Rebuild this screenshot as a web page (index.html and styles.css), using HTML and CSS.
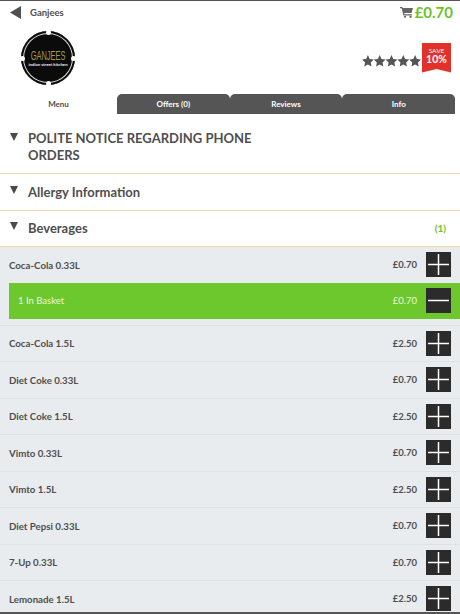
FILE: index.html
```html
<!DOCTYPE html>
<html lang="en">
<head>
<meta charset="utf-8">
<title>Ganjees</title>
<link rel="stylesheet" href="styles.css">
</head>
<body>
<div class="app">
  <header class="topbar">
    <svg class="back" width="11" height="13" viewBox="0 0 11 13"><path d="M0 6.500 11 0v13z" fill="#505050"/></svg>
    <span class="shop">Ganjees</span>
    <span class="spacer"></span>
    <svg class="cart" width="13" height="12" viewBox="0 0 13 12"><path d="M0 1h2.400l.3 1H13l-1.500 5H4.200l.3 1.200H12V9.500H3.400L1.600 2.200H0z" fill="#666"/><circle cx="5" cy="10.800" r="1.100" fill="#666"/><circle cx="10.600" cy="10.800" r="1.100" fill="#666"/></svg>
    <span class="total">£0.70</span>
  </header>
  <section class="brand">
    <div class="logo">
      <i class="dot dot-t"></i><i class="dot dot-b"></i><i class="dot dot-l"></i><i class="dot dot-r"></i>
      <span class="logo-name">GANJEES</span>
      <span class="logo-sub">indian street kitchen</span>
    </div>
    <span class="spacer"></span>
    <div class="stars">
      <svg width="59" height="12" viewBox="0 0 60 12" fill="#555">
        <path d="M6 0l1.800 4 4.200.5-3.100 2.900.8 4.300L6 9.600 2.300 11.700l.8-4.300L0 4.500 4.200 4z"/>
        <path transform="translate(12)" d="M6 0l1.800 4 4.200.5-3.100 2.900.8 4.300L6 9.600 2.300 11.700l.8-4.300L0 4.500 4.200 4z"/>
        <path transform="translate(24)" d="M6 0l1.800 4 4.200.5-3.100 2.900.8 4.300L6 9.600 2.300 11.700l.8-4.300L0 4.500 4.200 4z"/>
        <path transform="translate(36)" d="M6 0l1.800 4 4.200.5-3.100 2.900.8 4.300L6 9.600 2.300 11.700l.8-4.300L0 4.500 4.200 4z"/>
        <path transform="translate(48)" d="M6 0l1.800 4 4.200.5-3.100 2.900.8 4.300L6 9.600 2.300 11.700l.8-4.300L0 4.500 4.200 4z"/>
      </svg>
    </div>
    <div class="save"><span class="save-a">SAVE</span><span class="save-b">10%</span></div>
  </section>
  <nav class="tabs">
    <span class="tab tab-on">Menu</span>
    <span class="tab">Offers (0)</span>
    <span class="tab">Reviews</span>
    <span class="tab">Info</span>
  </nav>
  <section class="cat cat-first">
    <i class="tri"></i><h2 class="notice">POLITE NOTICE REGARDING PHONE ORDERS</h2>
  </section>
  <section class="cat">
    <i class="tri"></i><h2>Allergy Information</h2>
  </section>
  <section class="cat">
    <i class="tri"></i><h2>Beverages</h2><span class="count">(1)</span>
  </section>
  <ul class="items">
    <li class="item item-open">
      <div class="row"><span class="name">Coca-Cola 0.33L</span><span class="price">£0.70</span><span class="btn"><svg width="25" height="25" viewBox="0 0 25 25"><path d="M12.500 2v21M2 12.500h21" stroke="#fff" stroke-width="1.500"/></svg></span></div>
      <div class="basket"><span class="qty">1 In Basket</span><span class="price">£0.70</span><span class="btn"><svg width="25" height="25" viewBox="0 0 25 25"><path d="M2 12.500h21" stroke="#fff" stroke-width="1.500"/></svg></span></div>
    </li>
    <li class="item"><div class="row"><span class="name">Coca-Cola 1.5L</span><span class="price">£2.50</span><span class="btn"><svg width="25" height="25" viewBox="0 0 25 25"><path d="M12.500 2v21M2 12.500h21" stroke="#fff" stroke-width="1.500"/></svg></span></div></li>
    <li class="item"><div class="row"><span class="name">Diet Coke 0.33L</span><span class="price">£0.70</span><span class="btn"><svg width="25" height="25" viewBox="0 0 25 25"><path d="M12.500 2v21M2 12.500h21" stroke="#fff" stroke-width="1.500"/></svg></span></div></li>
    <li class="item"><div class="row"><span class="name">Diet Coke 1.5L</span><span class="price">£2.50</span><span class="btn"><svg width="25" height="25" viewBox="0 0 25 25"><path d="M12.500 2v21M2 12.500h21" stroke="#fff" stroke-width="1.500"/></svg></span></div></li>
    <li class="item"><div class="row"><span class="name">Vimto 0.33L</span><span class="price">£0.70</span><span class="btn"><svg width="25" height="25" viewBox="0 0 25 25"><path d="M12.500 2v21M2 12.500h21" stroke="#fff" stroke-width="1.500"/></svg></span></div></li>
    <li class="item"><div class="row"><span class="name">Vimto 1.5L</span><span class="price">£2.50</span><span class="btn"><svg width="25" height="25" viewBox="0 0 25 25"><path d="M12.500 2v21M2 12.500h21" stroke="#fff" stroke-width="1.500"/></svg></span></div></li>
    <li class="item"><div class="row"><span class="name">Diet Pepsi 0.33L</span><span class="price">£0.70</span><span class="btn"><svg width="25" height="25" viewBox="0 0 25 25"><path d="M12.500 2v21M2 12.500h21" stroke="#fff" stroke-width="1.500"/></svg></span></div></li>
    <li class="item"><div class="row"><span class="name">7-Up 0.33L</span><span class="price">£0.70</span><span class="btn"><svg width="25" height="25" viewBox="0 0 25 25"><path d="M12.500 2v21M2 12.500h21" stroke="#fff" stroke-width="1.500"/></svg></span></div></li>
    <li class="item"><div class="row"><span class="name">Lemonade 1.5L</span><span class="price">£2.50</span><span class="btn"><svg width="25" height="25" viewBox="0 0 25 25"><path d="M12.500 2v21M2 12.500h21" stroke="#fff" stroke-width="1.500"/></svg></span></div></li>
  </ul>
</div>
</body>
</html>
```
FILE: styles.css
```css
* { box-sizing: border-box; }
html, body { margin: 0; padding: 0; }
body { width: 460px; height: 614px; overflow: hidden; background: #fff; font-family: Lato, "Open Sans", sans-serif; color: #4e4e4e; }
.app { height: 614px; display: flex; flex-direction: column; border-top: 1px solid #555; border-bottom: 2px solid #555; overflow: hidden; }
.spacer { flex: 1; }
.topbar { height: 22px; flex: none; display: flex; align-items: center; padding: 0 7px 0 10px; }
.back { margin-right: 9px; }
.shop { font-size: 9.500px; font-weight: 700; }
.cart { margin-right: 2px; }
.total { font-size: 15px; font-weight: 700; color: #6cc22b; }
.brand { height: 71px; flex: none; display: flex; align-items: center; padding: 0 9px 0 21px; }
.logo { position: relative; width: 54px; height: 54px; border-radius: 50%; background: #0b0b0b; box-shadow: inset 0 0 0 2px #0b0b0b, inset 0 0 0 3px #ddd; display: flex; flex-direction: column; align-items: center; justify-content: center; margin-top: -1px; }
.dot { position: absolute; width: 5px; height: 5px; border-radius: 50%; background: #fff; }
.dot-t { top: -1px; left: 25px; }
.dot-b { bottom: -1px; left: 25px; }
.dot-l { left: -1px; top: 25px; }
.dot-r { right: -1px; top: 25px; }
.logo-name { font-family: "Liberation Sans", sans-serif; font-size: 12px; line-height: 12px; color: #a69a4a; transform: scaleX(.62); white-space: nowrap; }
.logo-sub { font-size: 4.300px; line-height: 5px; font-weight: 700; color: #eee; white-space: nowrap; }
.stars { margin-right: 1px; margin-top: 5px; height: 12px; display: flex; }
.save { width: 29px; height: 30px; background: #e2312b; clip-path: polygon(0 0, 100% 0, 100% 100%, 50% 88%, 0 100%); display: flex; flex-direction: column; align-items: center; padding-top: 5px; color: #fff; margin-top: -2px; }
.save-a { font-size: 6.500px; line-height: 6px; }
.save-b { font-size: 10.500px; line-height: 10px; font-weight: 700; }
.tabs { height: 20px; flex: none; display: flex; padding-right: 5px; }
.tab { flex: 1; background: #555; color: #fff; border-radius: 5px 5px 0 0; font-size: 8px; font-weight: 700; display: flex; align-items: center; justify-content: center; }
.tab-on { flex: none; width: 117px; background: #fff; color: #4e4e4e; }
.cat { flex: none; display: flex; align-items: flex-start; padding: 8.500px 14px 9px 10px; border-bottom: 1px solid #f6d7a4; }
.cat-first { padding-top: 16px; }
.tri { width: 0; height: 0; border-left: 4.500px solid transparent; border-right: 4.500px solid transparent; border-top: 8px solid #4a4a4a; margin-top: 3px; margin-right: 10px; flex: none; }
.cat h2 { margin: 0; font-size: 13px; line-height: 18px; font-weight: 700; flex: 1; }
.cat .notice { max-width: 240px; line-height: 17px; flex: none; }
.count { font-size: 10px; font-weight: 700; color: #6cc22b; line-height: 18px; }
.items { list-style: none; margin: 0; padding: 0; flex: 1; background: #e9ecee; }
.item { border-bottom: 1px solid #dfe2e4; }
.row { height: 35.500px; display: flex; align-items: center; padding: 0 9px; }
.name { flex: 1; font-size: 9.700px; font-weight: 700; }
.price { font-size: 9.500px; font-weight: 700; margin-right: 9px; }
.btn { width: 25px; height: 25px; background: #2b2b2b; display: flex; }
.basket { height: 36px; margin-left: 9px; margin-bottom: 6px; background: #6cc82c; color: #e8f7d8; display: flex; align-items: center; padding-left: 9px; padding-right: 9px; }
.qty { flex: 1; font-size: 9.500px; }
.basket .price { font-weight: 400; }
```
